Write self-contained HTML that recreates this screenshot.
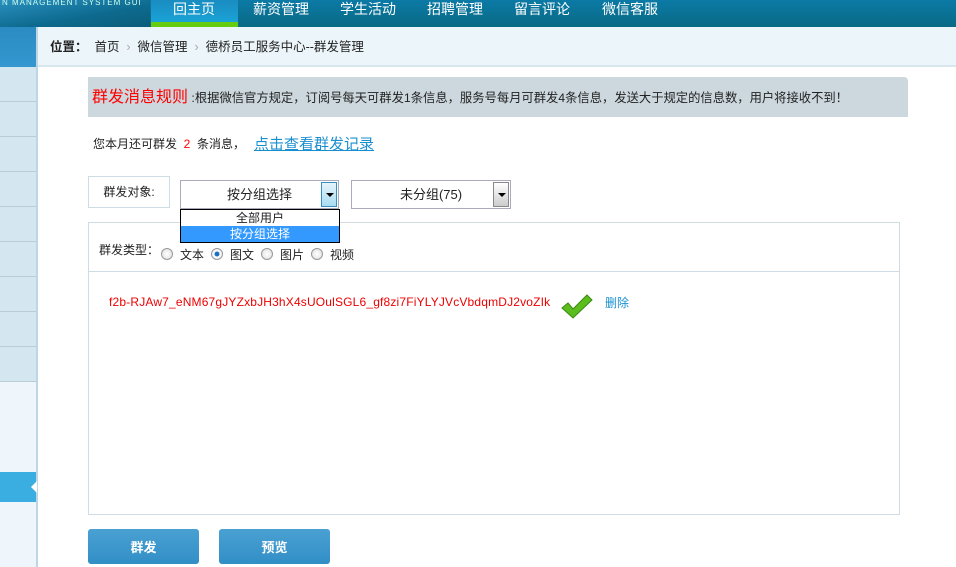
<!DOCTYPE html>
<html><head><meta charset="utf-8"><style>
*{margin:0;padding:0;box-sizing:border-box}
body{width:956px;height:567px;overflow:hidden;background:#fff;font-family:"Liberation Sans","Noto Sans CJK SC",sans-serif;font-size:12px;color:#222;position:relative}
.hdr{position:absolute;left:0;top:0;width:956px;height:27px;background:linear-gradient(#0b7aa6,#0a6a84)}
.logo{position:absolute;left:0;top:0;width:150px;height:27px;background:linear-gradient(170deg,#2a8fbf 0%,#0d6a8e 60%,#0b5d7a);color:#cfe;font-size:8px;letter-spacing:1px;padding-left:2px;line-height:6px;overflow:hidden}
.nav{position:absolute;top:0;height:22px;line-height:18px;color:#fff;font-size:14px}
.act{position:absolute;left:151px;top:0;width:87px;height:27px;background:linear-gradient(#1a8cc0,#1aa3d6);border-bottom:5px solid #66cc11}
.side{position:absolute;left:0;top:27px;width:38px;height:540px;background:#eef6fb;border-right:2px solid #bcd6e6}
.sb{position:absolute;left:0;top:0;width:36px;height:40px;background:linear-gradient(#2b8cc4,#3597cf)}
.row{position:absolute;left:0;width:36px;height:35px;background:#d4e6f0;border-bottom:1px solid #b9cdd9}
.bc{position:absolute;left:38px;top:27px;width:918px;height:40px;background:#ecf5fa;border-bottom:2px solid #d8e6ee;line-height:40px;padding-left:12px;font-size:12.5px}
.rule{position:absolute;left:88px;top:77px;width:820px;height:40px;background:#cdd8de;border-radius:0 4px 0 0;line-height:42px;padding-left:4px;font-size:12.3px}
.box{position:absolute;border:1px solid #cfdce4;background:#fff}
.btn{position:absolute;top:529px;width:111px;height:35px;background:linear-gradient(#4aa0d2,#318fc6);border-radius:3px;color:#fff;font-weight:bold;font-size:13px;text-align:center;line-height:38px}
.sel{position:absolute;top:180px;height:29px;border:1px solid #aab;background:#fff;text-align:center;line-height:28px;font-size:13px}
.arr{position:absolute;right:1px;top:1px;width:16px;height:25px;border:1px solid #888;background:linear-gradient(#fff,#ccc)}
.arr:after{content:"";position:absolute;left:4px;top:10px;border:4px solid transparent;border-top:4px solid #000}
.rd{display:inline-block;width:12px;height:12px;border-radius:50%;border:1px solid #999;background:radial-gradient(#fff,#ddd);vertical-align:-1px;margin:0 7px 0 7px}
</style></head><body>
<div class="hdr"></div>
<div class="logo">N MANAGEMENT SYSTEM GUI</div>
<div class="act"></div>
<div class="nav" style="left:173px">回主页</div>
<div class="nav" style="left:253px">薪资管理</div>
<div class="nav" style="left:340px">学生活动</div>
<div class="nav" style="left:427px">招聘管理</div>
<div class="nav" style="left:514px">留言评论</div>
<div class="nav" style="left:602px">微信客服</div>
<div class="side"><div class="sb"></div>
<div class="row" style="top:40px"></div><div class="row" style="top:75px"></div><div class="row" style="top:110px"></div><div class="row" style="top:145px"></div><div class="row" style="top:180px"></div><div class="row" style="top:215px"></div><div class="row" style="top:250px"></div><div class="row" style="top:285px"></div><div class="row" style="top:320px"></div>
<div style="position:absolute;left:0;top:445px;width:36px;height:30px;background:#3aaee0"></div>
<div style="position:absolute;left:31px;top:454px;border:6px solid transparent;border-right:6px solid #fff;border-left:0"></div>
</div>
<div class="bc"><b>位置：</b>&nbsp; 首页 <span style="color:#aaa">&nbsp;›&nbsp;</span> 微信管理 <span style="color:#aaa">&nbsp;›&nbsp;</span> 德桥员工服务中心--群发管理</div>
<div class="rule"><span style="color:#f00;font-size:16px">群发消息规则</span> :根据微信官方规定，订阅号每天可群发1条信息，服务号每月可群发4条信息，发送大于规定的信息数，用户将接收不到！</div>
<div style="position:absolute;left:93px;top:135px;font-size:12px">您本月还可群发 <span style="color:#f00">&nbsp;2&nbsp;</span> 条消息，</div>
<div style="position:absolute;left:254px;top:133px;font-size:15px;color:#1a8fd0;text-decoration:underline">点击查看群发记录</div>
<div class="box" style="left:88px;top:176px;width:82px;height:32px;line-height:30px;text-align:center;font-size:12px">群发对象:</div>
<div class="box" style="left:88px;top:222px;width:812px;height:293px"></div>
<div style="position:absolute;left:89px;top:271px;width:810px;height:1px;background:#cfdce4"></div>
<div class="sel" style="left:180px;width:159px">按分组选择<div class="arr" style="background:linear-gradient(#e6f4fb,#a8dcf2);border-color:#3b8fc0"></div></div>
<div class="sel" style="left:351px;width:160px">未分组(75)<div class="arr"></div></div>
<div style="position:absolute;left:180px;top:209px;width:160px;height:34px;border:1px solid #000;background:#fff;font-size:12px;text-align:center;line-height:16px">全部用户<div style="background:#3399ff;color:#fff">按分组选择</div></div>
<div style="position:absolute;left:99px;top:241px;font-size:12px">群发类型：</div>
<div style="position:absolute;left:154px;top:246px;font-size:12px"><span class="rd"></span>文本<span class="rd" style="background:radial-gradient(#1a6fc0 30%,#fff 40%,#ddd)"></span>图文<span class="rd"></span>图片<span class="rd"></span>视频</div>
<div style="position:absolute;left:109px;top:295px;color:#e00;font-size:12px;letter-spacing:0.17px">f2b-RJAw7_eNM67gJYZxbJH3hX4sUOulSGL6_gf8zi7FiYLYJVcVbdqmDJ2voZIk</div>
<svg style="position:absolute;left:560px;top:292px" width="34" height="28"><path d="M2 16 L8 11 L13 17 L27 3 L32 8 L13 26 Z" fill="#5cbd1e" stroke="#3a8a10" stroke-width="1"/></svg>
<div style="position:absolute;left:605px;top:294px;color:#1a8fd0;font-size:12px">删除</div>
<div class="btn" style="left:88px">群发</div>
<div class="btn" style="left:219px">预览</div>
</body></html>
